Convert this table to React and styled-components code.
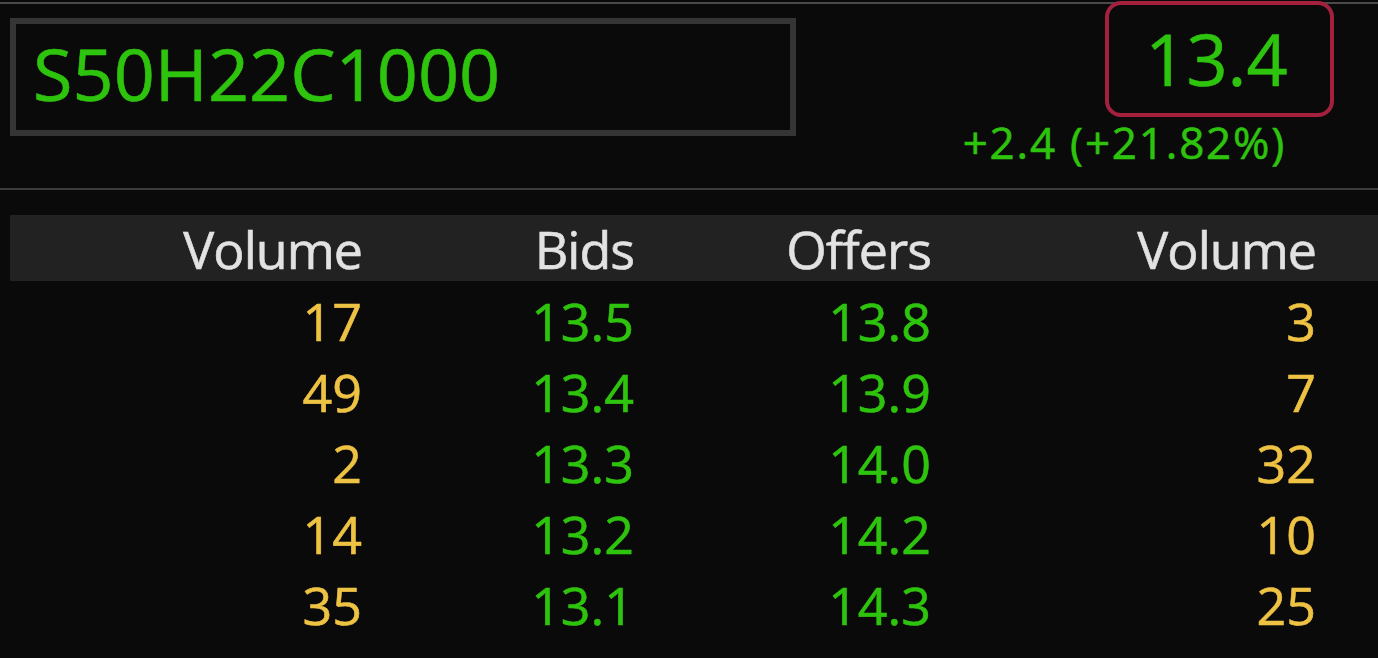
import * as React from 'react';
import styled, { createGlobalStyle } from 'styled-components';


const color = {
  page: '#0a0a0a',
  green: '#2ec40e',
  gold: '#eec243',
  label: '#e2e2e2',
  band: '#222222',
  rule: '#3c3c3c',
  frame: '#353535',
  accent: '#a3213f',
};

const GlobalStyle = createGlobalStyle`
  html, body {
    margin: 0;
    padding: 0;
    background: ${color.page};
  }

  body {
    font-family: "Open Sans", "DejaVu Sans", sans-serif;
    -webkit-text-stroke: 0.6px currentColor;
  }
`;

const Page = styled.div`
  width: 1378px;
  height: 658px;
  overflow: hidden;
  padding-top: 2px;
  box-sizing: border-box;
  background: ${color.page};
`;

const Header = styled.div`
  display: flex;
  justify-content: space-between;
  align-items: flex-start;
  height: 188px;
  border-top: 2px solid #4a4a4a;
  border-bottom: 2px solid ${color.rule};
  box-sizing: border-box;
`;

const SymbolBox = styled.div`
  width: 786px;
  height: 118px;
  margin-top: 14px;
  margin-left: 10px;
  padding-left: 17px;
  padding-bottom: 8px;
  box-sizing: border-box;
  border: 6px solid ${color.frame};
  display: flex;
  align-items: center;
  color: ${color.green};
  font-size: 72px;
  line-height: 1;
`;

const Quote = styled.div`
  display: flex;
  flex-direction: column;
  align-items: flex-end;
  margin-top: -3px;
  margin-right: 44px;
`;

const PriceBox = styled.div`
  width: 229px;
  height: 116px;
  box-sizing: border-box;
  border: 4px solid ${color.accent};
  border-radius: 16px;
  text-align: center;
  padding-right: 6px;
  color: ${color.green};
  font-size: 72px;
  line-height: 106px;
`;

const Change = styled.div`
  margin-right: 48px;
  color: ${color.green};
  font-size: 44px;
  line-height: 50px;
  letter-spacing: 1.8px;
`;

const Book = styled.div`
  margin-top: 25px;
  margin-left: 10px;
`;

const Row = styled.div`
  display: grid;
  grid-template-columns: 352px 272px 297px 385px 1fr;
  height: ${p => (p.head ? '66px' : '71px')};
  margin-bottom: ${p => (p.head ? '3px' : '0')};
  background: ${p => (p.head ? color.band : 'transparent')};
  font-size: 52px;
  letter-spacing: ${p => (p.head ? '-1px' : '0')};
  line-height: ${p => (p.head ? '68px' : '73px')};
`;

const Cell = styled.div`
  text-align: right;
  color: ${p => p.tone};
`;

const columns = ['Volume', 'Bids', 'Offers', 'Volume'];

const levels = [
  { bidVolume: 17, bid: '13.5', offer: '13.8', offerVolume: 3 },
  { bidVolume: 49, bid: '13.4', offer: '13.9', offerVolume: 7 },
  { bidVolume: 2, bid: '13.3', offer: '14.0', offerVolume: 32 },
  { bidVolume: 14, bid: '13.2', offer: '14.2', offerVolume: 10 },
  { bidVolume: 35, bid: '13.1', offer: '14.3', offerVolume: 25 },
];


export default function App() {
  return (
    <Page>
      <GlobalStyle/>
      <Header>
        <SymbolBox>S50H22C1000</SymbolBox>
        <Quote>
          <PriceBox>13.4</PriceBox>
          <Change>+2.4 (+21.82%)</Change>
        </Quote>
      </Header>

      <Book>
        <Row head>
          { columns.map((name, i) => <Cell key={ i } tone={ color.label }>{ name }</Cell>) }
          <div/>
        </Row>
        {
          levels.map((level, i) => (
            <Row key={ i }>
              <Cell tone={ color.gold }>{ level.bidVolume }</Cell>
              <Cell tone={ color.green }>{ level.bid }</Cell>
              <Cell tone={ color.green }>{ level.offer }</Cell>
              <Cell tone={ color.gold }>{ level.offerVolume }</Cell>
              <div/>
            </Row>
          ))
        }
      </Book>
    </Page>
  );
}
